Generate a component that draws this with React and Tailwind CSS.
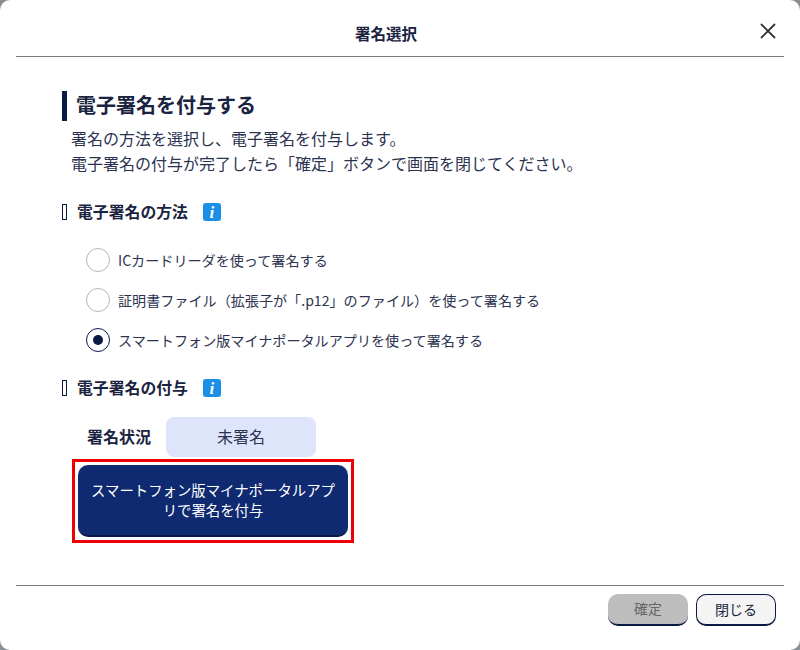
import React from "react";

const fontStack = "font-['Noto_Sans_CJK_JP','Noto_Sans',sans-serif]";

function InfoIcon() {
  return (
    <span className="ml-[15px] flex h-[18px] w-[18px] items-center justify-center rounded-[3px] bg-[#1a8fe8] font-['Liberation_Serif',serif] text-[17px] font-bold italic leading-none text-white">
      i
    </span>
  );
}

function SubHeading({ children }) {
  return (
    <div className="flex h-[18px] items-center">
      <span className="h-4 w-[5px] border border-[#0a1a45]" />
      <h3 className="ml-[10px] text-[15.85px] font-bold leading-[18px] text-[#1a2340]">{children}</h3>
      <InfoIcon />
    </div>
  );
}

function Radio({ label, checked }) {
  return (
    <label className="flex h-6 items-center">
      <span
        className={
          checked
            ? "flex h-6 w-6 items-center justify-center rounded-full border border-[#0a1a45] bg-white"
            : "h-6 w-6 rounded-full border border-[#b5b5b5] bg-white"
        }
      >
        {checked && <span className="h-[10px] w-[10px] rounded-full bg-[#0a1a45]" />}
      </span>
      <span className="ml-[8px] text-[14.1px] leading-6 text-[#2c3350]">{label}</span>
    </label>
  );
}

export default function App() {
  return (
    <div className={`h-[650px] w-[800px] overflow-hidden bg-[#8a8f96] ${fontStack}`}>
      <div className="flex h-full flex-col rounded-[10px] bg-white px-4">
        {/* header */}
        <header className="relative flex h-[57px] shrink-0 items-center justify-center border-b border-[#7a7a7a] pr-[28px] pt-[11px]">
          <h2 className="text-[15.5px] font-bold text-[#1a2340]">署名選択</h2>
          <button className="absolute right-[6px] top-[21px] text-[#333333]">
            <svg width="20" height="20" viewBox="0 0 20 20" fill="none" stroke="currentColor" strokeWidth="1.8">
              <path d="M3 3 L17 17 M17 3 L3 17" />
            </svg>
          </button>
        </header>

        {/* body */}
        <main className="flex-1 pl-[46px] pt-[34px]">
          <div className="flex h-[30px] items-center border-l-[5px] border-[#0a1a45] pb-[3px] pl-[9px]">
            <h1 className="text-[20px] font-bold text-[#1a2340]">電子署名を付与する</h1>
          </div>
          <p className="mt-[5px] pl-[9px] text-[16px] leading-[25px] text-[#2c3350]">
            署名の方法を選択し、電子署名を付与します。
            <br />
            電子署名の付与が完了したら「確定」ボタンで画面を閉じてください。
          </p>

          <div className="mt-[27px]">
            <SubHeading>電子署名の方法</SubHeading>
          </div>
          <div className="mt-[27px] flex flex-col gap-4 pl-6">
            <Radio label="ICカードリーダを使って署名する" />
            <Radio label="証明書ファイル（拡張子が「.p12」のファイル）を使って署名する" />
            <Radio label="スマートフォン版マイナポータルアプリを使って署名する" checked />
          </div>

          <div className="mt-[27px]">
            <SubHeading>電子署名の付与</SubHeading>
          </div>
          <div className="mt-5 flex items-center pl-[25px]">
            <span className="w-[79px] pb-[2px] text-[16px] font-bold text-[#1a2340]">署名状況</span>
            <span className="flex h-10 w-[150px] items-center justify-center rounded-lg bg-[#dee5fb] pb-[2px] text-[16px] text-[#2c3350]">
              未署名
            </span>
          </div>
          <div className="ml-[10px] mt-[2px] w-[282px] border-[3px] border-[#ee0000] p-[3px]">
            <button className="flex h-[72px] w-full items-center justify-center rounded-[10px] border-b-2 border-[#0a1a45] bg-[#0f2a70] px-[10px] text-[14.4px] leading-5 text-white">
              スマートフォン版マイナポータルアプリで署名を付与
            </button>
          </div>
        </main>

        {/* footer */}
        <footer className="flex h-[65px] shrink-0 items-start justify-end gap-2 border-t border-[#7a7a7a] pr-2 pt-2">
          <button className="h-8 w-20 rounded-[10px] border-b-2 border-[#0a1a45] bg-[#bdbdbd] pb-[2px] text-sm text-[#666666]">
            確定
          </button>
          <button className="h-8 w-20 rounded-[10px] border border-b-2 border-[#0a1a45] bg-[#f4f4f4] pb-[2px] text-sm text-[#1a2340]">
            閉じる
          </button>
        </footer>
      </div>
    </div>
  );
}
